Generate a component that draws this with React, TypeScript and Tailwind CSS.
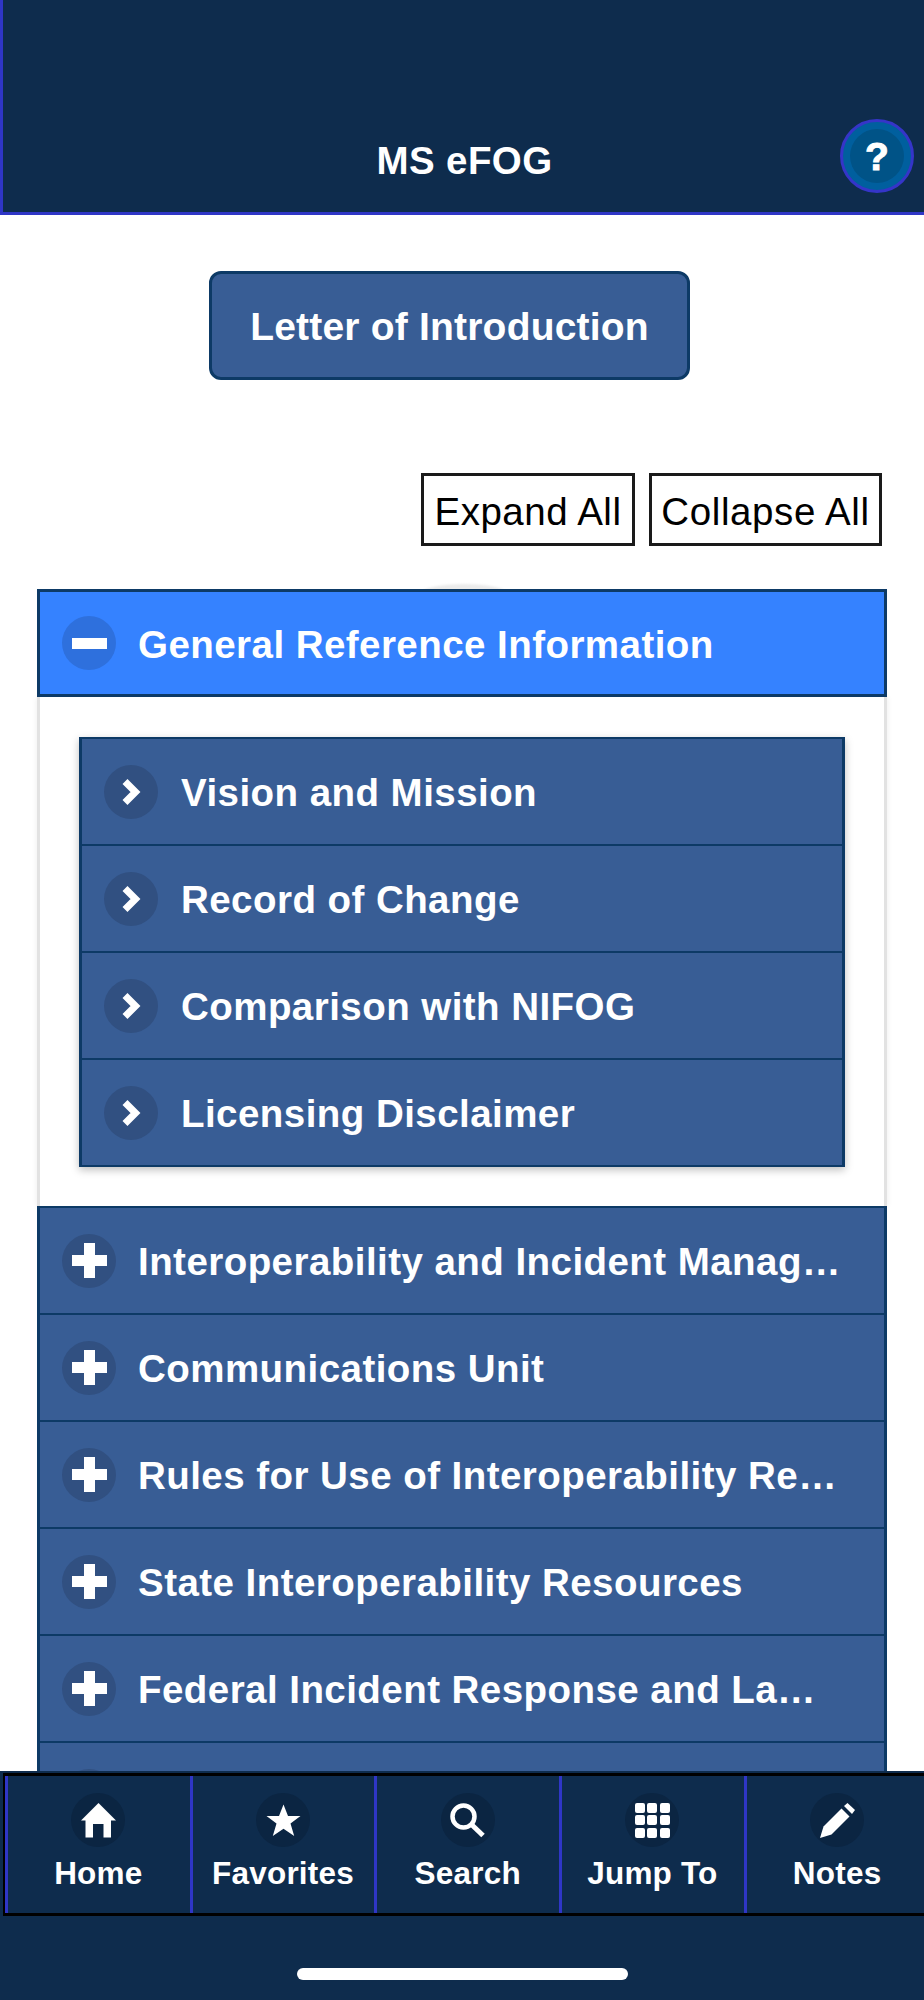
import { ReactNode } from "react"

const SECTIONS = [
  "Interoperability and Incident Management",
  "Communications Unit",
  "Rules for Use of Interoperability Resources",
  "State Interoperability Resources",
  "Federal Incident Response and Law Enforcement",
  "",
]

const SUB_ITEMS = ["Vision and Mission", "Record of Change", "Comparison with NIFOG", "Licensing Disclaimer"]

const MinusIcon = () => (
  <svg width="35" height="35" viewBox="0 0 35 35" fill="white">
    <rect x="0" y="12" width="35" height="11" />
  </svg>
)

const PlusIcon = () => (
  <svg width="35" height="35" viewBox="0 0 35 35" fill="white">
    <path d="M12 0H23V12H35V23H23V35H12V23H0V12H12Z" />
  </svg>
)

const ChevronIcon = () => (
  <svg width="20" height="28" viewBox="0 0 20 28" fill="none" stroke="white" strokeWidth="7" strokeMiterlimit="10">
    <polyline points="4,3.5 14.5,14 4,24.5" />
  </svg>
)

const HomeIcon = () => (
  <svg width="35" height="35" viewBox="0 0 35 35" fill="white">
    <path d="M17.5 0L35 17.5H30V34.5H22.5V21H12V34.5H4.5V17.5H0Z" />
  </svg>
)

const StarIcon = () => (
  <svg width="35" height="35" viewBox="0 0 35 35" fill="white">
    <path d="M17.5 1.5L22 13H34.5L24.5 20.5L28.2 33L17.5 25.8L6.8 33L10.5 20.5L0.5 13H13Z" />
  </svg>
)

const SearchIcon = () => (
  <svg width="35" height="35" viewBox="0 0 35 35" fill="none" stroke="white" strokeWidth="4.5">
    <circle cx="13.5" cy="13.5" r="11" />
    <path d="M21.5 21.5L33 32.5" strokeWidth="5" />
  </svg>
)

const GridIcon = () => (
  <div className="grid grid-cols-3 gap-[2.5px] w-[35px]">
    {Array.from({ length: 9 }).map((_, i) => (
      <div key={i} className="h-[10px] rounded-[2px] bg-white" />
    ))}
  </div>
)

const PencilIcon = () => (
  <svg width="35" height="35" viewBox="0 0 35 35" fill="white">
    <path d="M0 35L3.5 23.5L21.5 5.5L29.5 13.5L11.5 31.5Z" />
    <path d="M24 3L27.5 0L35 7L32 11Z" />
  </svg>
)

function IconCircle({ className, children }: { className: string; children: ReactNode }) {
  return <div className={`w-[54px] h-[54px] rounded-full flex items-center justify-center shrink-0 ${className}`}>{children}</div>
}

function NavItem({ label, icon }: { label: string; icon: ReactNode }) {
  return (
    <div className="w-[184.7px] shrink-0 border-l-[3px] border-[#2f36c6] flex flex-col items-center pt-[17px] pr-[1px]">
      <IconCircle className="bg-[#0b2542]">{icon}</IconCircle>
      <span className="mt-[8px] text-[31.5px] leading-[36px] tracking-[0.2px] font-bold text-white">{label}</span>
    </div>
  )
}

export default function App() {
  return (
    <div className="w-[924px] h-[2000px] overflow-hidden flex flex-col bg-white font-['Liberation_Sans',Arial,sans-serif]">
      <header className="relative h-[215px] shrink-0 bg-[#0e2c4d] border-l-[3px] border-b-[3px] border-[#2f36c6] flex items-end justify-center pb-[32px] pl-[2px]">
        <h1 className="text-[38.5px] leading-none tracking-[0.4px] font-bold text-white">MS eFOG</h1>
        <button className="absolute left-[837px] top-[119px] w-[74px] h-[74px] rounded-full border-[3px] border-[#3535c8] bg-[#005f9e] flex items-center justify-center">
          <span className="w-[54px] h-[54px] rounded-full bg-[#005387] flex items-center justify-center text-[39px] leading-none font-bold text-white [-webkit-text-stroke:1px_white]">?</span>
        </button>
      </header>

      <main className="flex-1 min-h-0 overflow-hidden">
        <button className="block mt-[56px] ml-[209px] w-[481px] h-[109px] pt-[4px] rounded-[12px] border-[3px] border-[#0d3a66] bg-[#385d95] text-[39px] tracking-[0.2px] font-bold text-white">
          Letter of Introduction
        </button>

        <div className="mt-[93px] pr-[42px] flex justify-end gap-[14px]">
          <button className="w-[214px] h-[73px] pt-[4px] border-[3px] border-[#1a1a1a] bg-white text-[38.5px] tracking-[0.5px] text-black">Expand All</button>
          <button className="w-[233px] h-[73px] pt-[4px] border-[3px] border-[#1a1a1a] bg-white text-[38.5px] tracking-[0.6px] text-black">Collapse All</button>
        </div>

        <div className="relative mt-[43px] mx-[37px]">
          {/* faint arc peeking out above the accordion */}
          <div className="absolute left-[383px] -top-[5px] w-[88px] h-[20px] rounded-[50%] bg-[#ebebeb] blur-[1px]" />

          <div className="relative h-[108px] border-[3px] border-[#0d3a66] bg-[#3582ff] flex items-center pl-[22px]">
            <IconCircle className="bg-[#2e70dd]">
              <MinusIcon />
            </IconCircle>
            <span className="ml-[22px] pt-[3px] text-[38.5px] tracking-[0.45px] font-bold text-white truncate">General Reference Information</span>
          </div>

          <div className="border-x-[3px] border-[#e2e2e2] bg-white pt-[40px] pb-[39px] pl-[39px] pr-[39px] shadow-[0_0_6px_rgba(0,0,0,0.08)]">
            <div className="border-t-2 border-x-[3px] border-[#0d3a66] shadow-[0_3px_8px_rgba(0,0,0,0.25)]">
              {SUB_ITEMS.map((item) => (
                <div key={item} className="h-[107px] border-b-2 border-[#0d3a66] bg-[#385d95] flex items-center pl-[22px]">
                  <IconCircle className="bg-[#315081]">
                    <ChevronIcon />
                  </IconCircle>
                  <span className="ml-[23px] pt-[2px] text-[38.5px] tracking-[0.45px] font-bold text-white truncate">{item}</span>
                </div>
              ))}
            </div>
          </div>

          <div className="border-t-2 border-x-[3px] border-[#0d3a66]">
            {SECTIONS.map((section, i) => (
              <div key={i} className="h-[107px] border-b-2 border-[#0d3a66] bg-[#385d95] flex items-center pl-[22px] pr-[43px]">
                <IconCircle className="bg-[#315081]">
                  <PlusIcon />
                </IconCircle>
                <span className="ml-[22px] pt-[2px] text-[38.5px] tracking-[0.45px] font-bold text-white truncate">{section}</span>
              </div>
            ))}
          </div>
        </div>
      </main>

      <footer className="relative h-[229px] shrink-0 bg-[#0e2c4d] overflow-hidden pt-[2px]">
        <nav className="ml-[3px] w-[960px] h-[143px] border-t-[3px] border-b-[3px] border-l-2 border-black flex">
          <NavItem label="Home" icon={<HomeIcon />} />
          <NavItem label="Favorites" icon={<StarIcon />} />
          <NavItem label="Search" icon={<SearchIcon />} />
          <NavItem label="Jump To" icon={<GridIcon />} />
          <NavItem label="Notes" icon={<PencilIcon />} />
        </nav>
        <div className="mt-[52px] mx-auto w-[331px] h-[12px] rounded-full bg-white" />
      </footer>
    </div>
  )
}
